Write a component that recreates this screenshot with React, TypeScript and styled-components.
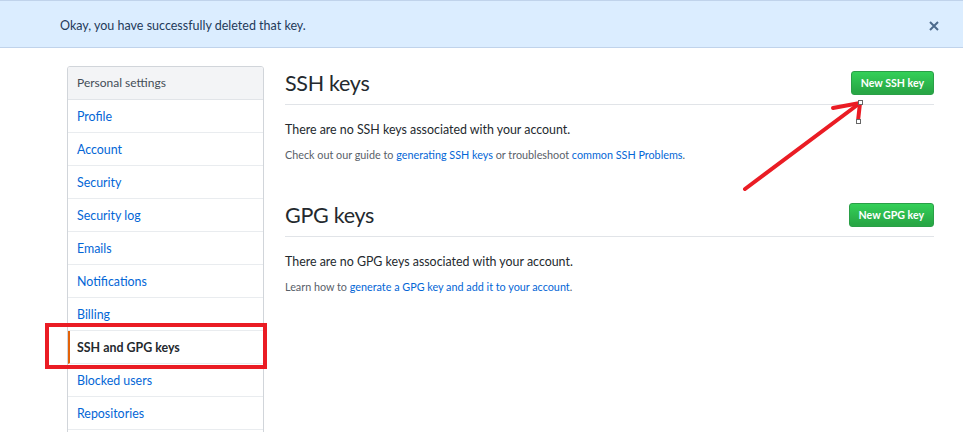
import React from "react";
import styled, {createGlobalStyle} from "styled-components";

const GlobalStyle = createGlobalStyle`
  html, body {
    margin: 0;
    padding: 0;
    background: #ffffff;
  }
  body {
    font-family: Lato, "Open Sans", "Liberation Sans", sans-serif;
    color: #24292e;
  }
`;

const navItems = [
  "Profile",
  "Account",
  "Security",
  "Security log",
  "Emails",
  "Notifications",
  "Billing",
  "SSH and GPG keys",
  "Blocked users",
  "Repositories",
];

const App = () => {
  return (
    <Page>
      <GlobalStyle />
      <Flash>
        <span>Okay, you have successfully deleted that key.</span>
        <CloseButton aria-label="Dismiss">
          <svg width="10" height="10" viewBox="0 0 10 10">
            <path d="M1 1 L9 9 M9 1 L1 9" stroke="#4c6a8c" strokeWidth="2" />
          </svg>
        </CloseButton>
      </Flash>

      <Layout>
        <Sidebar>
          <SidebarHeader>Personal settings</SidebarHeader>
          {navItems.map((item) => (
            <NavItem key={item} selected={item === "SSH and GPG keys"}>
              {item}
            </NavItem>
          ))}
        </Sidebar>

        <Main>
          <Subhead>
            <Heading>SSH keys</Heading>
            <GreenButton>New SSH key</GreenButton>
          </Subhead>
          <Blank>There are no SSH keys associated with your account.</Blank>
          <Note>
            Check out our guide to <a href="#">generating SSH keys</a> or
            troubleshoot <a href="#">common SSH Problems</a>.
          </Note>

          <Subhead spaced>
            <Heading>GPG keys</Heading>
            <GreenButton>New GPG key</GreenButton>
          </Subhead>
          <Blank>There are no GPG keys associated with your account.</Blank>
          <Note>
            Learn how to <a href="#">generate a GPG key and add it to your account</a>.
          </Note>
        </Main>
      </Layout>

      {/* annotations drawn on top of the screenshot */}
      <HighlightBox />
      <ArrowOverlay width="963" height="432" viewBox="0 0 963 432">
        <g stroke="#ea1c24" strokeWidth="4" strokeLinecap="round" fill="none">
          <path d="M745 189 L860 103" />
          <path d="M860 103 L833 108" />
          <path d="M860 103 L858 121" />
        </g>
        <rect x="858.5" y="100.5" width="4" height="4" fill="#fff" stroke="#666" strokeWidth="1" />
        <rect x="856.5" y="119.5" width="4" height="4" fill="#fff" stroke="#666" strokeWidth="1" />
      </ArrowOverlay>
    </Page>
  );
};

const Page = styled.div`
  position: relative;
  width: 963px;
  height: 432px;
  overflow: hidden;
`;

const Flash = styled.div`
  height: 46px;
  display: flex;
  align-items: center;
  justify-content: space-between;
  padding: 0 20px 0 60px;
  background-color: #dbedff;
  border-top: 1px solid #c0d3eb;
  border-bottom: 1px solid #c0d3eb;
  font-size: 12.5px;
  color: #1f3a5a;
  span {
    padding-top: 2px;
  }
`;

const CloseButton = styled.button`
  border: 0;
  background: none;
  padding: 4px;
  margin-top: 3px;
  display: flex;
  align-items: center;
  cursor: pointer;
`;

const Layout = styled.div`
  display: flex;
  align-items: flex-start;
  gap: 21px;
  padding: 18px 29px 0 67px;
`;

const Sidebar = styled.nav`
  width: 195px;
  flex-shrink: 0;
  height: 380px;
  border: 1px solid #d1d5da;
  border-radius: 3px;
  overflow: hidden;
`;

const SidebarHeader = styled.div`
  height: 32px;
  line-height: 32px;
  padding-left: 9px;
  background-color: #f3f4f6;
  border-bottom: 1px solid #e1e4e8;
  font-size: 12px;
  color: #444d56;
`;

const NavItem = styled.a<{selected?: boolean}>`
  display: block;
  height: 32px;
  line-height: 33px;
  padding-left: ${(p) => (p.selected ? "7px" : "9px")};
  border-bottom: 1px solid #e9ecef;
  border-left: ${(p) => (p.selected ? "2px solid #e36209" : "0")};
  font-size: 12.4px;
  font-weight: ${(p) => (p.selected ? 700 : 400)};
  color: ${(p) => (p.selected ? "#24292e" : "#0366d6")};
  text-decoration: none;
  cursor: pointer;
`;

const Main = styled.main`
  flex: 1;
  min-width: 0;
`;

const Subhead = styled.div<{spaced?: boolean}>`
  display: flex;
  align-items: center;
  justify-content: space-between;
  margin-top: ${(p) => (p.spaced ? "34px" : "0")};
  padding-bottom: 4px;
  border-bottom: 1px solid #e1e4e8;
`;

const Heading = styled.h2`
  margin: 0;
  font-size: 21.5px;
  line-height: 34px;
  font-weight: 400;
  letter-spacing: -0.3px;
  color: #24292e;
`;

const GreenButton = styled.button`
  height: 24px;
  padding: 0 9px;
  border: 1px solid #2a9f47;
  border-radius: 3px;
  background-image: linear-gradient(-180deg, #34d058 0%, #28a745 90%);
  color: #ffffff;
  font-family: inherit;
  font-size: 10.6px;
  font-weight: 700;
  cursor: pointer;
`;

const Blank = styled.p`
  margin: 15px 0 0;
  font-size: 12.4px;
  line-height: 20px;
  color: #24292e;
`;

const Note = styled.p`
  margin: 6px 0 0;
  font-size: 10.8px;
  line-height: 18px;
  color: #586069;
  a {
    color: #0366d6;
    text-decoration: none;
  }
`;

const HighlightBox = styled.div`
  position: absolute;
  left: 45px;
  top: 323px;
  width: 214px;
  height: 38px;
  border: 4px solid #ea1c24;
  pointer-events: none;
`;

const ArrowOverlay = styled.svg`
  position: absolute;
  left: 0;
  top: 0;
  pointer-events: none;
`;

export default App;
